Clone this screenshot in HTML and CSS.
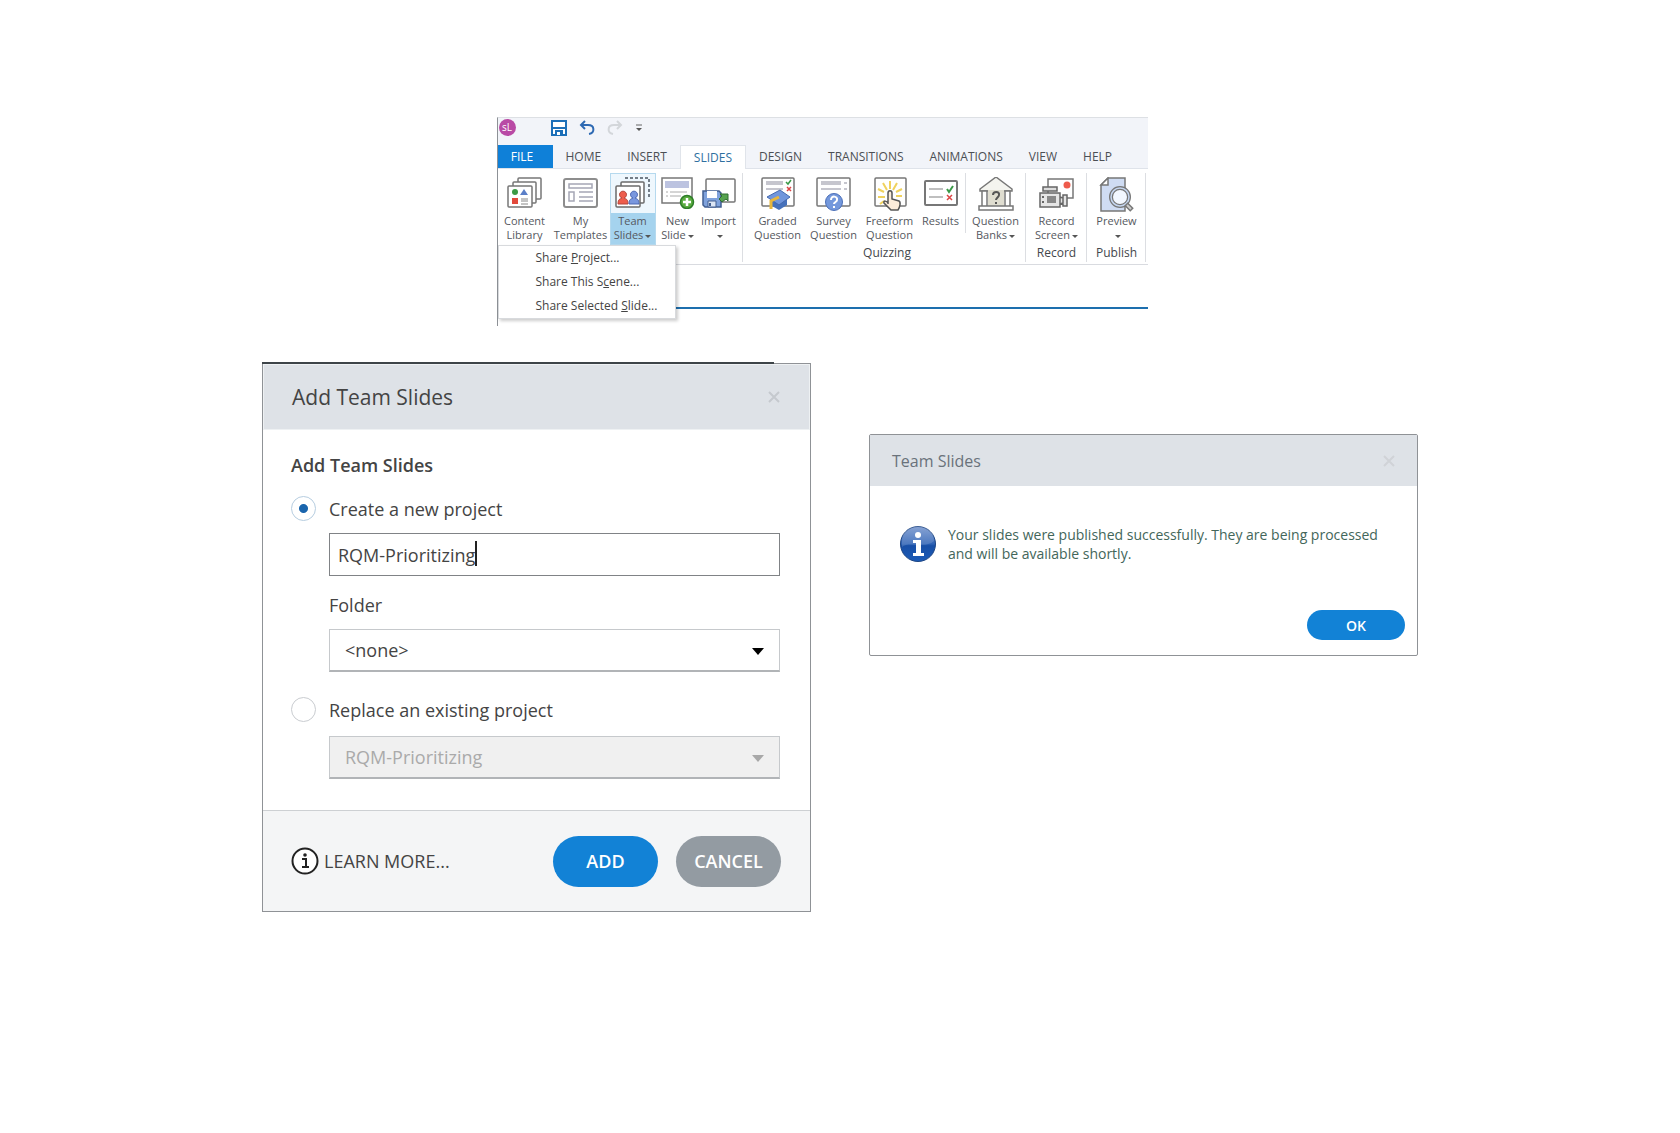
FILE: index.html
```html
<!DOCTYPE html>
<html lang="en">
<head>
    <meta charset="UTF-8">
    <meta name="viewport" content="width=device-width, initial-scale=1.0">
    <title>Team Slides</title>
    <link rel="stylesheet" href="styles.css">
</head>
<body>

    <!-- Ribbon -->
    <header>
    <div class="ribbon">
        <div class="titlebar">
            <span class="logo">sL</span>
            <button class="quick" aria-label="Save">
                <svg width="16" height="16" viewBox="0 0 16 16"><path d="M1 1h14v14H1z" fill="#fff" stroke="#1c6fb8" stroke-width="2"/><path d="M2 8h12" stroke="#1c6fb8" stroke-width="2"/><path d="M4 10h8v5H4z" fill="#1c6fb8"/><path d="M6 12h3v3H6z" fill="#fff"/></svg>
            </button>
            <button class="quick" aria-label="Undo">
                <svg width="16" height="16" viewBox="0 0 16 16"><path d="M6 1L2 5l4 4M2 5h7c7 0 7 8 1 9" fill="none" stroke="#2d69b3" stroke-width="2"/></svg>
            </button>
            <button class="quick" aria-label="Redo">
                <svg width="16" height="16" viewBox="0 0 16 16"><path d="M10 1l4 4-4 4M14 5H7c-7 0-7 8-1 9" fill="none" stroke="#d3d6da" stroke-width="2"/></svg>
            </button>
            <button class="quick more" aria-label="More">
                <svg width="8" height="8" viewBox="0 0 8 8"><path d="M1 1h6" stroke="#666" /><path d="M1 4h6L4 7z" fill="#555"/></svg>
            </button>
        </div>

        <div class="tabs">
            <button class="tab file">FILE</button>
            <button class="tab">HOME</button>
            <button class="tab">INSERT</button>
            <button class="tab active">SLIDES</button>
            <button class="tab">DESIGN</button>
            <button class="tab">TRANSITIONS</button>
            <button class="tab">ANIMATIONS</button>
            <button class="tab">VIEW</button>
            <button class="tab">HELP</button>
        </div>

        <div class="panel">
            <div class="group group-slides">
                <div class="tools">
                    <button class="tool w-54">
                        <svg class="icon" width="36" height="32" viewBox="0 0 36 32">
                            <g fill="#fff" stroke="#777" stroke-width="1.5"><rect x="11" y="1" width="23" height="21" rx="1"/><rect x="6" y="5" width="23" height="21" rx="1"/><rect x="1" y="9" width="24" height="21" rx="1"/></g>
                            <circle cx="8" cy="15" r="3" fill="#3c9a45"/><path d="M13 18l4-6 4 6z" fill="#5b7fc8"/><rect x="5" y="21" width="6" height="6" fill="#e2493b"/><path d="M14 22h7M14 24h7M14 27h7" stroke="#888"/>
                        </svg>
                        <span class="caption">Content<br>Library</span>
                    </button>
                    <button class="tool w-58">
                        <svg class="icon" width="36" height="32" viewBox="0 0 36 32">
                            <rect x="1" y="2" width="33" height="28" rx="2" fill="#fff" stroke="#8d8d8d" stroke-width="2"/>
                            <path d="M6 7h23v4H6zM6 15h5v9H6z" fill="#fff" stroke="#a5a7b5" stroke-width="1.5"/><path d="M16 15h14M16 20h14M16 24h14" stroke="#a5a7b5" stroke-width="1.5"/>
                        </svg>
                        <span class="caption">My<br>Templates</span>
                    </button>
                    <button class="tool w-46 selected">
                        <svg class="icon" width="36" height="32" viewBox="0 0 36 32">
                            <path d="M10 1h24v21" fill="none" stroke="#4b5560" stroke-width="1.5" stroke-dasharray="3 2"/>
                            <g fill="#fff" stroke="#6b6b6b" stroke-width="1.5"><rect x="6" y="5" width="23" height="21" rx="1"/><rect x="1" y="9" width="24" height="21" rx="1"/></g>
                            <path d="M3 27c0-5 2-5 4-6a3.500 3.500 0 1 1 2 0c2 1 4 1 4 6z" fill="#ee5d4c" stroke="#b4463c"/><path d="M14 27c0-5 2-5 4-6a3.500 3.500 0 1 1 2 0c2 1 4 1 4 6z" fill="#7997de" stroke="#4c68b4"/>
                        </svg>
                        <span class="caption">Team<br>Slides<i class="arrow"></i></span>
                    </button>
                    <button class="tool w-44">
                        <svg class="icon" width="36" height="32" viewBox="0 0 36 32">
                            <rect x="2" y="1" width="30" height="25" fill="#fff" stroke="#777" stroke-width="1.500"/><path d="M5 4h24v7H5z" fill="#bcc3e0"/><path d="M6 15h2M10 15h17M6 19h2M10 19h11" stroke="#aaa"/>
                            <circle cx="27" cy="25" r="6.500" fill="#5aac40" stroke="#2d7d28" stroke-width="1.500"/><path d="M27 21v8M23 25h8" stroke="#fff" stroke-width="2.500"/>
                        </svg>
                        <span class="caption">New<br>Slide<i class="arrow"></i></span>
                    </button>
                    <button class="tool w-38">
                        <svg class="icon" width="36" height="32" viewBox="0 0 36 32">
                            <rect x="5" y="2" width="29" height="23" rx="1" fill="#fff" stroke="#777" stroke-width="1.500"/>
                            <path d="M2 14h16l2 2v14H4l-2-2z" fill="#7fa2dc" stroke="#425f91" stroke-width="1.500"/><path d="M6 14h10v7H6z" fill="#fff"/><path d="M7 24h8v6H7z" fill="#dce6f5" stroke="#425f91"/><path d="M9 26v3" stroke="#425f91" stroke-width="2"/>
                            <path d="M18 22l3-3-2-2h8v7l-2-2-4 3z" fill="#56a34f" stroke="#2f6d32"/>
                        </svg>
                        <span class="caption">Import<br><i class="arrow"></i></span>
                    </button>
                </div>
            </div>

            <div class="group group-quiz">
                <div class="tools">
                    <button class="tool w-56">
                        <svg class="icon" width="36" height="34" viewBox="0 0 36 34">
                            <rect x="2" y="1" width="32" height="28" rx="1" fill="#fff" stroke="#777" stroke-width="1.500"/><path d="M6 5h17M6 7h17M6 12h17" stroke="#b4b4bf" stroke-width="1.500"/>
                            <path d="M26 5l2 2 3-4" fill="none" stroke="#3a9a48" stroke-width="1.500"/><path d="M27 10l4 4M31 10l-4 4" stroke="#dc4545" stroke-width="1.500"/>
                            <path d="M12 21v8l7 4 8-5v-8z" fill="#4671bb"/><path d="M7 20l13-7 10 7-11 8z" fill="#7196dc" stroke="#4469af"/><path d="M19 20l-8 4v8" fill="none" stroke="#e7b73d" stroke-width="3"/>
                        </svg>
                        <span class="caption">Graded<br>Question</span>
                    </button>
                    <button class="tool w-56">
                        <svg class="icon" width="36" height="34" viewBox="0 0 36 34">
                            <rect x="1" y="1" width="33" height="28" rx="1" fill="#fff" stroke="#777" stroke-width="1.500"/><path d="M5 5h20M5 7h20M5 12h20M28 6h3M28 12h3" stroke="#b4b4bf" stroke-width="1.500"/>
                            <circle cx="18" cy="25" r="8.500" fill="#7498dc" stroke="#4c70b8"/><path d="M15 23c0-5 7-4 6 0 0 2-3 2-3 4M18 29v2" fill="none" stroke="#fff" stroke-width="2"/>
                        </svg>
                        <span class="caption">Survey<br>Question</span>
                    </button>
                    <button class="tool w-56">
                        <svg class="icon" width="36" height="34" viewBox="0 0 36 34">
                            <rect x="3" y="1" width="31" height="28" rx="1" fill="#fff" stroke="#777" stroke-width="1.500"/>
                            <path d="M18 4v8M11 6l4 7M25 6l-4 7M6 12l6 3M30 12l-6 3M6 20h7M24 19h6M12 24l-4 3" stroke="#f0d25e" stroke-width="2"/>
                            <path d="M16 27V16c0-3 4-3 4 0v6l7 2c2 1 1 6-1 9h-7l-7-7c-1-3 3-2 4 0z" fill="#fcecda" stroke="#555" stroke-width="1.500"/>
                        </svg>
                        <span class="caption">Freeform<br>Question</span>
                    </button>
                    <button class="tool w-46">
                        <svg class="icon" width="36" height="32" viewBox="0 0 36 32">
                            <rect x="2" y="4" width="32" height="24" rx="1" fill="#fff" stroke="#777" stroke-width="2"/><path d="M6 12h14M6 20h14" stroke="#aaa" stroke-width="1.500"/>
                            <path d="M24 12l2 3 4-6" fill="none" stroke="#3a9a48" stroke-width="2"/><path d="M24 18l5 5M29 18l-5 5" stroke="#dc4545" stroke-width="1.500"/>
                        </svg>
                        <span class="caption">Results</span>
                    </button>
                    <span class="divider"></span>
                    <button class="tool w-58">
                        <svg class="icon" width="36" height="34" viewBox="0 0 36 34">
                            <path d="M2 12L18 0l16 12v2H2z" fill="#f4f4ef" stroke="#777" stroke-width="1.500"/><path d="M10 13h16v16H10z" fill="#dfddd0"/>
                            <path d="M4 14h5v15H4zM27 14h5v15h-5zM1 29h34v4H1z" fill="#fff" stroke="#777" stroke-width="1.500"/><path d="M15 18c0-4 7-4 6 0 0 2-3 3-3 5M18 25v2" fill="none" stroke="#555" stroke-width="2"/>
                        </svg>
                        <span class="caption">Question<br>Banks<i class="arrow"></i></span>
                    </button>
                </div>
                <span class="group-name">Quizzing</span>
            </div>

            <div class="group group-small">
                <div class="tools">
                    <button class="tool w-58">
                        <svg class="icon" width="36" height="32" viewBox="0 0 36 32">
                            <path d="M9 2h25v19H9z" fill="#fff" stroke="#777" stroke-width="1.500"/><circle cx="28" cy="8" r="3.500" fill="#ee5b4c"/>
                            <path d="M4 10h14v4H4z" fill="#ddd" stroke="#666" stroke-width="1.500"/><path d="M1 16h20v14H1zM21 20l3 1v5l-3 1zM24 18h4v11h-4z" fill="#e5e5e5" stroke="#666" stroke-width="1.500"/><path d="M8 19h9v7H8z" fill="#888"/><path d="M4 19v2M4 24v2" stroke="#666" stroke-width="2"/>
                        </svg>
                        <span class="caption">Record<br>Screen<i class="arrow"></i></span>
                    </button>
                </div>
                <span class="group-name">Record</span>
            </div>

            <div class="group group-small">
                <div class="tools">
                    <button class="tool w-56">
                        <svg class="icon" width="36" height="36" viewBox="0 0 36 36">
                            <path d="M9 1h17v33H2V8z" fill="#cfdcf3" stroke="#777" stroke-width="1.500"/><path d="M9 1v7H2z" fill="#fff" stroke="#777" stroke-width="1.500"/>
                            <circle cx="21" cy="20" r="9" fill="#f2f7ff" stroke="#777" stroke-width="4"/><circle cx="21" cy="20" r="9" fill="none" stroke="#c4d5ef" stroke-width="1.500"/><path d="M27 27l6 6" stroke="#777" stroke-width="5"/><path d="M28 28l4 4" stroke="#ccc" stroke-width="2"/>
                        </svg>
                        <span class="caption">Preview<br><i class="arrow"></i></span>
                    </button>
                </div>
                <span class="group-name">Publish</span>
            </div>
        </div>

        <div class="canvas"></div>

        <!-- Team Slides drop-down -->
        <div class="menu">
            <a href="#project">Share <u>P</u>roject...</a>
            <a href="#scene">Share This S<u>c</u>ene...</a>
            <a href="#slide">Share Selected <u>S</u>lide...</a>
        </div>
    </div>
    </header>

    <div class="dialogs">

        <!-- Add Team Slides dialog -->
        <form class="dialog add-dialog">
            <div class="dialog-head">
                <h1>Add Team Slides</h1>
                <button type="button" class="close" aria-label="Close"><svg width="12" height="12" viewBox="0 0 12 12"><path d="M1 1l10 10M11 1L1 11"/></svg></button>
            </div>
            <div class="dialog-body">
                <h2>Add Team Slides</h2>
                <div class="option">
                    <input type="radio" name="target" id="create" checked>
                    <label for="create">Create a new project</label>
                </div>
                <div class="field">
                    <input type="text" value="RQM-Prioritizing" aria-label="Project name">
                    <span class="caret"></span>
                </div>
                <label class="folder-label" for="folder">Folder</label>
                <div class="field">
                    <select id="folder"><option>&lt;none&gt;</option></select>
                    <span class="select-arrow"></span>
                </div>
                <div class="option second">
                    <input type="radio" name="target" id="replace">
                    <label for="replace">Replace an existing project</label>
                </div>
                <div class="field disabled">
                    <select disabled aria-label="Existing project"><option>RQM-Prioritizing</option></select>
                    <span class="select-arrow"></span>
                </div>
            </div>
            <div class="dialog-foot">
                <a class="learn" href="#learn">
                    <svg width="28" height="28" viewBox="0 0 28 28"><circle cx="14" cy="14" r="12.500" fill="#fff" stroke="#222" stroke-width="2"/><circle cx="14" cy="8" r="1.800" fill="#222"/><path d="M11 12h4v8M11 20h7" fill="none" stroke="#222" stroke-width="2"/></svg>
                    LEARN MORE...
                </a>
                <button type="button" class="btn">ADD</button>
                <button type="button" class="btn cancel">CANCEL</button>
            </div>
        </form>

        <!-- Confirmation dialog -->
        <div class="dialog done-dialog">
            <div class="dialog-head">
                <h1>Team Slides</h1>
                <button type="button" class="close" aria-label="Close"><svg width="12" height="12" viewBox="0 0 12 12"><path d="M1 1l10 10M11 1L1 11"/></svg></button>
            </div>
            <div class="message">
                <svg width="36" height="38" viewBox="0 0 36 38">
                    <defs><linearGradient id="ball" x1="0" y1="0" x2="0" y2="1"><stop offset="0" stop-color="#7393cc"/><stop offset=".5" stop-color="#2e62b5"/><stop offset=".55" stop-color="#184fa6"/><stop offset="1" stop-color="#1b5bb8"/></linearGradient></defs>
                    <circle cx="18" cy="19" r="17.500" fill="url(#ball)" stroke="#1d4583"/>
                    <path d="M2 22C8 16 26 24 34 16A16 16 0 0 0 2 16z" fill="#fff" opacity=".15"/>
                    <circle cx="18" cy="10" r="3" fill="#fff"/><path d="M13 15h8v13h3v3H13v-3h3V18h-3z" fill="#fff"/>
                </svg>
                <p>Your slides were published successfully. They are being processed<br>and will be available shortly.</p>
            </div>
            <div class="actions">
                <button type="button" class="btn small">OK</button>
            </div>
        </div>

    </div>

</body>
</html>
```
FILE: styles.css
```css
/* General Styles */
* {
    margin: 0;
    padding: 0;
    box-sizing: border-box;
}
body {
    background: #fff;
    color: #444;
    font-family: "Open Sans", "Noto Sans", sans-serif;
    padding: 117px 20px 40px;
}
button, input, select {
    font: inherit;
    color: inherit;
    border: none;
    background: none;
}
a {
    color: inherit;
    text-decoration: none;
}

/* Ribbon */
header {
    padding-right: 36px;
}
.ribbon {
    position: relative;
    max-width: 651px;
    margin: 0 auto;
    border-left: 1px solid #8d9196;
    border-top: 1px solid #dde0e4;
}
.titlebar {
    display: flex;
    align-items: center;
    gap: 12px;
    height: 27px;
    padding: 0 1px 8px;
    background: #f2f4f9;
}
.logo {
    width: 17px;
    height: 17px;
    margin-right: 23px;
    border-radius: 50%;
    background: #b94aa5;
    color: #fff;
    font-size: 10px;
    line-height: 16px;
    text-align: center;
}
.quick {
    display: flex;
}
.tabs {
    display: flex;
    height: 24px;
    background: #f2f4f9;
    border-bottom: 1px solid #dfe3ea;
    font-size: 12px;
    line-height: 23px;
    color: #4c4f54;
}
.tab {
    padding: 0 13px;
}
.tab.file {
    width: 55px;
    background: #0f80d8;
    color: #fff;
    padding: 0 18px 0 12px;
}
.tab.active {
    height: 24px;
    background: #fff;
    color: #2e6f9f;
    border: 1px solid #e0e4ea;
    border-bottom: none;
    line-height: 22px;
}

/* Ribbon groups */
.panel {
    display: flex;
    height: 96px;
    padding-top: 4px;
    border-bottom: 1px solid #d9dbe0;
    font-size: 11px;
    line-height: 14px;
}
.group {
    height: 89px;
    border-right: 1px solid #dcdee2;
    text-align: center;
}
.group-slides {
    padding-right: 4px;
}
.group-quiz {
    padding-left: 7px;
}
.group-small {
    padding-left: 2px;
}
.tools {
    display: flex;
    height: 72px;
}
.tool {
    display: flex;
    flex-direction: column;
    align-items: center;
    height: 72px;
    color: #55585e;
}
.icon {
    flex: none;
    margin-top: 4px;
}
.caption {
    width: 100%;
    margin-top: auto;
    height: 31px;
    white-space: nowrap;
}
.w-38 { width: 38px; }
.w-44 { width: 44px; }
.w-46 { width: 46px; }
.w-54 { width: 54px; }
.w-56 { width: 56px; }
.w-58 { width: 58px; }
.selected {
    background: #eef7fd;
    border: 1px solid #b5d9ee;
}
.selected .icon {
    margin-top: 3px;
}
.selected .caption {
    padding-top: 1px;
    background: #a5d3ee;
}
.arrow {
    display: inline-block;
    margin-left: 2px;
    vertical-align: 1px;
    border: 3px solid transparent;
    border-top-color: #555;
    border-bottom: none;
}
.divider {
    width: 1px;
    height: 60px;
    margin: 0 1px;
    background: #dcdee2;
}
.group-name {
    font-size: 12px;
    line-height: 16px;
    color: #44474c;
}
.canvas {
    height: 61px;
    padding-top: 42px;
}
.canvas::before {
    content: "";
    display: block;
    height: 2px;
    background: #1d6fae;
}

/* Ribbon menu */
.menu {
    position: absolute;
    top: 127px;
    left: 0;
    width: 178px;
    background: #fff;
    border: 1px solid #d8dadd;
    box-shadow: 2px 2px 3px rgba(0, 0, 0, 0.2);
}
.menu a {
    display: block;
    padding-left: 37px;
    font-size: 12px;
    line-height: 24px;
}

/* Dialogs */
.dialogs {
    display: grid;
    grid-template-columns: 1fr 1fr;
    align-items: start;
    gap: 58px;
    max-width: 1156px;
    margin: 37px auto 0;
}
.dialog {
    position: relative;
    border: 1px solid #8f9296;
}
.dialog-head {
    display: flex;
    align-items: center;
    justify-content: space-between;
    background: #dee2e7;
}
.dialog-head h1 {
    font-weight: normal;
}
.close {
    display: flex;
}
.close path {
    fill: none;
    stroke: #c5c9ce;
    stroke-width: 2;
}

/* Add dialog */
.add-dialog {
    font-size: 18px;
    line-height: 24px;
}
.add-dialog::before {
    content: "";
    position: absolute;
    top: -2px;
    left: -1px;
    width: 512px;
    height: 2px;
    background: #3d4448;
}
.add-dialog .dialog-head {
    height: 66px;
    padding: 0 29px 0 28px;
    border: 1px solid #eef1f3;
}
.add-dialog h1 {
    font-size: 21px;
}
.dialog-body {
    padding: 22px 30px 31px 28px;
}
.dialog-body h2 {
    font-size: 18px;
    font-weight: 600;
    line-height: 26px;
}
.option {
    display: flex;
    align-items: center;
    gap: 13px;
    height: 26px;
    margin: 17px 0 12px;
}
.option label {
    padding-top: 2px;
}
.option.second {
    margin: 24px 0 14px;
}
input[type="radio"] {
    appearance: none;
    width: 25px;
    height: 25px;
    border: 1px solid #c9ccd0;
    border-radius: 50%;
}
input[type="radio"]:checked {
    border-color: #b6cde0;
    background: radial-gradient(circle, #1a65ad 4px, #fff 5px);
}
.field {
    position: relative;
    margin-left: 38px;
}
.field input {
    display: block;
    width: 100%;
    height: 43px;
    padding: 0 8px;
    border: 1px solid #808386;
}
.caret {
    position: absolute;
    top: 8px;
    left: 146px;
    width: 2px;
    height: 25px;
    background: #222;
}
.folder-label {
    display: block;
    margin: 17px 0 12px 38px;
}
.field select {
    appearance: none;
    display: block;
    width: 100%;
    height: 43px;
    padding: 0 15px;
    border: 1px solid #c6c9cc;
    border-bottom: 2px solid #b1b4b7;
    background: #fff;
}
.select-arrow {
    position: absolute;
    top: 19px;
    right: 16px;
    border: 6px solid transparent;
    border-top: 7px solid #000;
    border-bottom: none;
}
.disabled select {
    background: #f0f0f0;
    color: #aaa;
    opacity: 1;
}
.disabled .select-arrow {
    border-top-color: #a8a8a8;
}
.dialog-foot {
    display: flex;
    align-items: center;
    gap: 18px;
    height: 101px;
    padding: 0 29px 0 28px;
    background: #f4f5f6;
    border-top: 1px solid #cdd0d3;
}
.learn {
    display: flex;
    align-items: center;
    gap: 5px;
    margin-right: auto;
    white-space: nowrap;
}
.btn {
    width: 105px;
    height: 51px;
    border-radius: 26px;
    background: #1282d6;
    color: #fff;
    font-size: 18px;
    font-weight: 600;
}
.btn.cancel {
    background: #939ba2;
}

/* Confirmation dialog */
.done-dialog {
    margin-top: 71px;
    border-radius: 2px;
}
.done-dialog .dialog-head {
    height: 51px;
    padding: 0 22px;
}
.done-dialog h1 {
    font-size: 16px;
    color: #6a727b;
}
.done-dialog .close path {
    stroke: #d0d3d7;
}
.message {
    display: flex;
    gap: 12px;
    padding: 39px 29px 0 30px;
    font-size: 14px;
    line-height: 19px;
    color: #43665a;
}
.message svg {
    flex: none;
}
.actions {
    display: flex;
    justify-content: flex-end;
    padding: 47px 12px 15px;
}
.btn.small {
    width: 98px;
    height: 30px;
    font-size: 14px;
}

/* Responsive Styles */
@media (max-width: 900px) {
    .dialogs {
        grid-template-columns: 1fr;
    }
}
```
